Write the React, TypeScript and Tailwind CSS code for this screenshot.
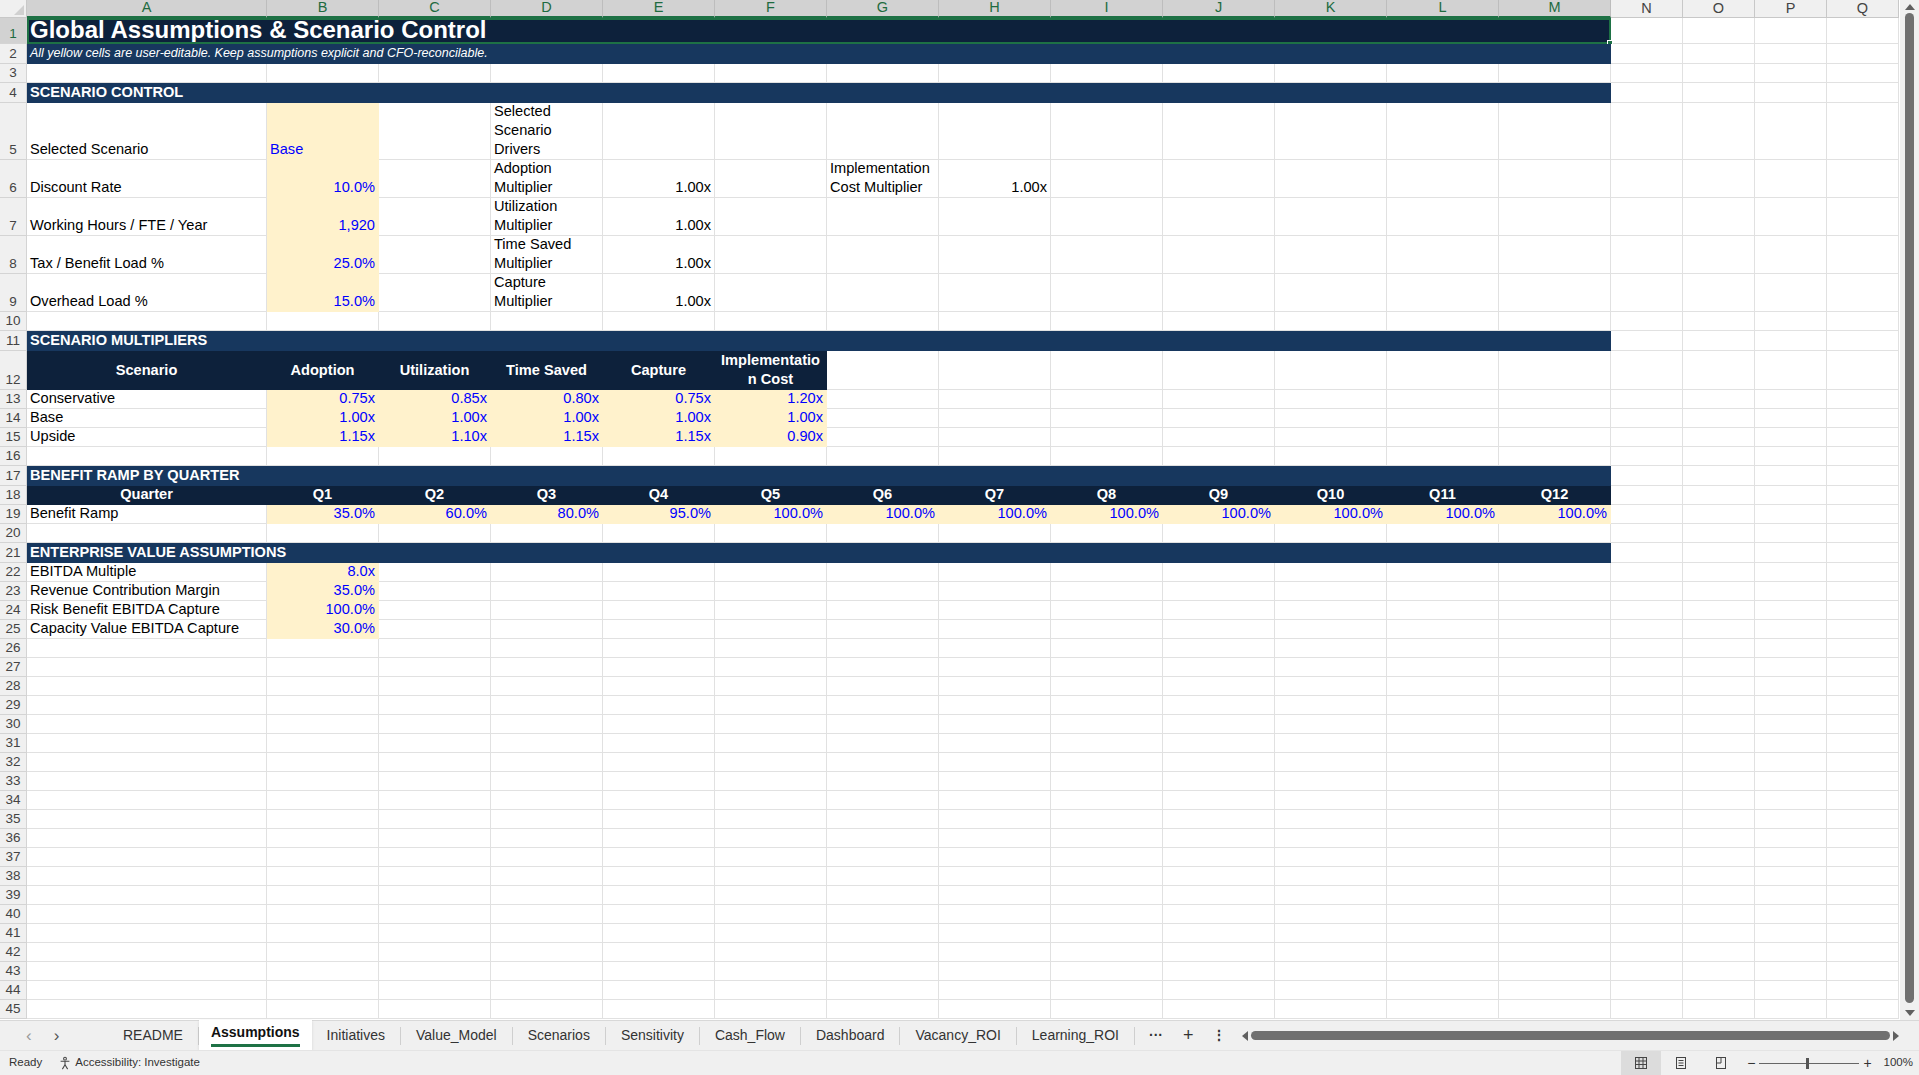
import React from "react";

const W = { A: 240, X: 112, N: 72 };
const cols = ["A","B","C","D","E","F","G","H","I","J","K","L","M","N","O","P","Q"];
const widthOf = (c: string) => (c === "A" ? W.A : ["N","O","P","Q"].includes(c) ? W.N : W.X);

type CellDef = { t?: string; cls?: string; span?: number; fill?: string; align?: "r" | "c" | "l"; mid?: boolean };

function Row({ n, h, cells, sel }: { n: number; h: number; cells: Record<string, CellDef>; sel?: boolean }) {
  const out: React.ReactNode[] = [];
  let i = 0;
  while (i < cols.length) {
    const c = cols[i];
    const d = cells[c];
    const span = d?.span ?? 1;
    let w = 0;
    for (let k = 0; k < span; k++) w += widthOf(cols[i + k]);
    const fill = d?.fill;
    const al = d?.align === "r" ? "justify-end text-right" : d?.align === "c" ? "justify-center text-center" : "justify-start";
    out.push(
      <div
        key={c}
        style={{ width: w, height: h }}
        className={`shrink-0 flex ${d?.mid ? "items-center" : "items-end"} px-[3px] overflow-hidden leading-[19px] whitespace-pre-line border-r border-b ${fill ?? "bg-white border-[#e1e1e1]"} ${al} ${d?.cls ?? "text-black"}`}
      >
        {d?.t}
      </div>
    );
    i += span;
  }
  return (
    <div className="flex relative" style={{ height: h }}>
      <div
        style={{ height: h }}
        className={`w-[27px] shrink-0 flex items-end justify-center leading-[18px] text-[13.5px] border-r border-b border-[#d4d4d4] ${sel ? "bg-[#d2d2d2] text-[#1e6b40]" : "bg-[#f0f0f0] text-[#444]"}`}
      >
        {n}
      </div>
      {out}
      {sel && <div className="absolute left-[27px] top-0 w-[1584px] border-2 border-[#1e7145] pointer-events-none" style={{ height: h }}><div className="absolute -right-[4px] -bottom-[4px] w-[6px] h-[6px] bg-[#1e7145] border border-white" /></div>}
    </div>
  );
}

const Y = "bg-[#fff2cc] border-[#fff2cc]";
const NAVY = "bg-[#17375e] border-[#17375e]";
const DARK = "bg-[#0d213b] border-[#0d213b]";
const blue = "text-[#0000ff]";
const sec = "text-white font-bold";

export default function App() {
  const quarters = ["Q1","Q2","Q3","Q4","Q5","Q6","Q7","Q8","Q9","Q10","Q11","Q12"];
  const ramp = ["35.0%","60.0%","80.0%","95.0%","100.0%","100.0%","100.0%","100.0%","100.0%","100.0%","100.0%","100.0%"];
  const qCols = cols.slice(1, 13);
  const r18: Record<string, CellDef> = { A: { t: "Quarter", fill: DARK, cls: sec, align: "c" } };
  const r19: Record<string, CellDef> = { A: { t: "Benefit Ramp" } };
  qCols.forEach((c, i) => {
    r18[c] = { t: quarters[i], fill: DARK, cls: sec, align: "c" };
    r19[c] = { t: ramp[i], fill: Y, cls: blue, align: "r" };
  });
  const mult = [
    ["Conservative", "0.75x", "0.85x", "0.80x", "0.75x", "1.20x"],
    ["Base", "1.00x", "1.00x", "1.00x", "1.00x", "1.00x"],
    ["Upside", "1.15x", "1.10x", "1.15x", "1.15x", "0.90x"],
  ];
  const mrow = (r: string[]) => {
    const o: Record<string, CellDef> = { A: { t: r[0] } };
    ["B","C","D","E","F"].forEach((c, i) => (o[c] = { t: r[i + 1], fill: Y, cls: blue, align: "r" }));
    return o;
  };
  const ev = [["EBITDA Multiple","8.0x"],["Revenue Contribution Margin","35.0%"],["Risk Benefit EBITDA Capture","100.0%"],["Capacity Value EBITDA Capture","30.0%"]];
  const empties = Array.from({ length: 20 }, (_, i) => 26 + i);

  return (
    <div className="w-[1919px] h-[1075px] overflow-hidden bg-white flex flex-col text-[14.6px]" style={{ fontFamily: '"Liberation Sans", Arial, sans-serif' }}>
      <div className="flex flex-1 min-h-0">
        <div className="w-[1900px] overflow-hidden">
          <div className="flex h-[18px]">
            <div className="w-[27px] h-[18px] bg-[#f0f0f0] border-r border-b border-[#c8c8c8] relative">
              <div className="absolute right-[2px] bottom-[2px] w-0 h-0 border-l-[10px] border-l-transparent border-b-[10px] border-b-[#d0d0d0]" />
            </div>
            {cols.map((c, i) => (
              <div key={c} style={{ width: widthOf(c) }} className={`h-[18px] shrink-0 flex items-center justify-center text-[14.5px] border-r border-b ${i < 13 ? "bg-[#d2d2d2] text-[#1e6b40] border-[#bdbdbd] border-b-[#1e7145] border-b-2" : "bg-[#f0f0f0] text-[#444] border-[#c8c8c8]"}`}>
                {c}
              </div>
            ))}
          </div>
          <Row n={1} h={26} sel cells={{ A: { t: "Global Assumptions & Scenario Control", span: 13, fill: DARK, cls: "text-white font-bold text-[24px] leading-[27px]" } }} />
          <Row n={2} h={20} cells={{ A: { t: "All yellow cells are user-editable. Keep assumptions explicit and CFO-reconcilable.", span: 13, fill: NAVY, cls: "text-white italic text-[12.5px]" } }} />
          <Row n={3} h={19} cells={{}} />
          <Row n={4} h={20} cells={{ A: { t: "SCENARIO CONTROL", span: 13, fill: NAVY, cls: sec } }} />
          <Row n={5} h={57} cells={{ A: { t: "Selected Scenario" }, B: { t: "Base", fill: Y, cls: blue }, D: { t: "Selected\nScenario\nDrivers" } }} />
          <Row n={6} h={38} cells={{ A: { t: "Discount Rate" }, B: { t: "10.0%", fill: Y, cls: blue, align: "r" }, D: { t: "Adoption\nMultiplier" }, E: { t: "1.00x", align: "r" }, G: { t: "Implementation\nCost Multiplier" }, H: { t: "1.00x", align: "r" } }} />
          <Row n={7} h={38} cells={{ A: { t: "Working Hours / FTE / Year" }, B: { t: "1,920", fill: Y, cls: blue, align: "r" }, D: { t: "Utilization\nMultiplier" }, E: { t: "1.00x", align: "r" } }} />
          <Row n={8} h={38} cells={{ A: { t: "Tax / Benefit Load %" }, B: { t: "25.0%", fill: Y, cls: blue, align: "r" }, D: { t: "Time Saved\nMultiplier" }, E: { t: "1.00x", align: "r" } }} />
          <Row n={9} h={38} cells={{ A: { t: "Overhead Load %" }, B: { t: "15.0%", fill: Y, cls: blue, align: "r" }, D: { t: "Capture\nMultiplier" }, E: { t: "1.00x", align: "r" } }} />
          <Row n={10} h={19} cells={{}} />
          <Row n={11} h={20} cells={{ A: { t: "SCENARIO MULTIPLIERS", span: 13, fill: NAVY, cls: sec } }} />
          <Row n={12} h={39} cells={{
            A: { t: "Scenario", fill: DARK, cls: sec, align: "c", mid: true },
            B: { t: "Adoption", fill: DARK, cls: sec, align: "c", mid: true },
            C: { t: "Utilization", fill: DARK, cls: sec, align: "c", mid: true },
            D: { t: "Time Saved", fill: DARK, cls: sec, align: "c", mid: true },
            E: { t: "Capture", fill: DARK, cls: sec, align: "c", mid: true },
            F: { t: "Implementatio\nn Cost", fill: DARK, cls: sec, align: "c", mid: true },
          }} />
          {mult.map((r, i) => <Row key={i} n={13 + i} h={19} cells={mrow(r)} />)}
          <Row n={16} h={19} cells={{}} />
          <Row n={17} h={20} cells={{ A: { t: "BENEFIT RAMP BY QUARTER", span: 13, fill: NAVY, cls: sec } }} />
          <Row n={18} h={19} cells={r18} />
          <Row n={19} h={19} cells={r19} />
          <Row n={20} h={19} cells={{}} />
          <Row n={21} h={20} cells={{ A: { t: "ENTERPRISE VALUE ASSUMPTIONS", span: 13, fill: NAVY, cls: sec } }} />
          {ev.map((r, i) => <Row key={i} n={22 + i} h={19} cells={{ A: { t: r[0] }, B: { t: r[1], fill: Y, cls: blue, align: "r" } }} />)}
          {empties.map((n) => <Row key={n} n={n} h={19} cells={{}} />)}
        </div>
        <div className="w-[19px] bg-[#f0f0f0] flex flex-col items-center pt-[4px] gap-[3px]">
          <div className="w-0 h-0 border-l-[5px] border-r-[5px] border-b-[6px] border-l-transparent border-r-transparent border-b-[#606060]" />
          <div className="w-[9px] flex-1 rounded-full bg-[#707070] mb-[4px]" />
          <div className="w-0 h-0 border-l-[5px] border-r-[5px] border-t-[6px] border-l-transparent border-r-transparent border-t-[#606060] mb-[4px]" />
        </div>
      </div>
      <div className="h-[30px] shrink-0 bg-[#f0f0f0] border-t border-[#d8d8d8] flex items-center text-[14px] text-[#333]">
        <div className="w-[108px] flex items-center gap-[22px] pl-[26px] text-[#999] text-[17px]">
          <span>‹</span><span className="text-[#555]">›</span>
        </div>
        {["README","Assumptions","Initiatives","Value_Model","Scenarios","Sensitivity","Cash_Flow","Dashboard","Vacancy_ROI","Learning_ROI"].map((t) =>
          t === "Assumptions" ? (
            <div key={t} className="h-[30px] px-[12px] bg-white flex flex-col items-center justify-center shadow-sm -mt-[2px]">
              <span className="font-semibold text-[#111]">{t}</span>
              <div className="w-full h-[3px] bg-[#1e7145] mt-[1px]" />
            </div>
          ) : (
            <div key={t} className="h-[18px] px-[15px] flex items-center border-r border-[#cfcfcf]">{t}</div>
          )
        )}
        <span className="px-[14px] font-bold">···</span>
        <span className="px-[6px] text-[18px]">+</span>
        <span className="px-[12px] font-bold">⋮</span>
        <div className="flex-1 h-[16px] mx-[4px] mr-[20px] flex items-center gap-[3px]">
          <div className="w-0 h-0 border-t-[5px] border-b-[5px] border-r-[6px] border-t-transparent border-b-transparent border-r-[#606060]" />
          <div className="flex-1 h-[9px] rounded-full bg-[#707070]" />
          <div className="w-0 h-0 border-t-[5px] border-b-[5px] border-l-[6px] border-t-transparent border-b-transparent border-l-[#606060]" />
        </div>
      </div>
      <div className="h-[25px] shrink-0 bg-[#f0f0f0] border-t border-[#e4e4e4] flex items-center text-[11.5px] text-[#333]">
        <span className="pl-[9px]">Ready</span>
        <span className="ml-[16px] flex items-center gap-[3px]">
          <svg width="14" height="14" viewBox="0 0 16 16" fill="none" stroke="#444" strokeWidth="1.2"><circle cx="8" cy="3" r="1.6" /><path d="M3 6h10M8 6v4M8 10l-3 5M8 10l3 5" /></svg>
          Accessibility: Investigate
        </span>
        <div className="flex-1" />
        <div className="h-[25px] w-[40px] bg-[#dcdcdc] flex items-center justify-center">
          <svg width="14" height="14" viewBox="0 0 14 14" fill="none" stroke="#444"><rect x="1.5" y="1.5" width="11" height="11" /><path d="M1.5 5h11M1.5 8.5h11M5 1.5v11M9 1.5v11" /></svg>
        </div>
        <div className="w-[40px] flex justify-center">
          <svg width="14" height="14" viewBox="0 0 14 14" fill="none" stroke="#444"><rect x="2.5" y="1.5" width="9" height="11" /><path d="M4.5 4.5h5M4.5 7h5M4.5 9.5h5" /></svg>
        </div>
        <div className="w-[40px] flex justify-center">
          <svg width="14" height="14" viewBox="0 0 14 14" fill="none" stroke="#444"><rect x="2.5" y="1.5" width="9" height="11" /><path d="M2.5 7h4.5V1.5" /></svg>
        </div>
        <span className="ml-[6px] text-[14px]">−</span>
        <div className="relative w-[100px] h-[12px] mx-[4px] flex items-center">
          <div className="w-full h-px bg-[#666]" />
          <div className="absolute left-[47px] w-[3px] h-[11px] bg-[#555]" />
        </div>
        <span className="text-[14px]">+</span>
        <span className="ml-[12px] mr-[6px]">100%</span>
      </div>
    </div>
  );
}
